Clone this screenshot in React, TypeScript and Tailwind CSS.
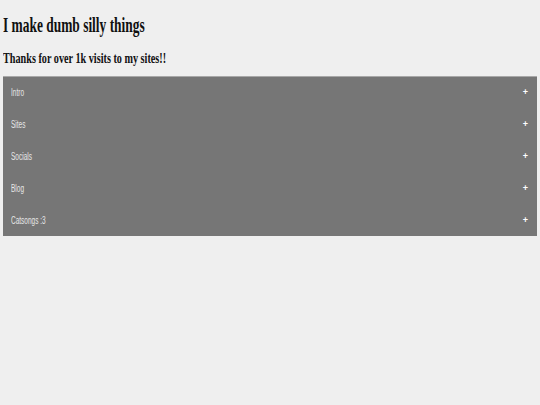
const sections = ["Intro", "Sites", "Socials", "Blog", "Catsongs :3"]

export default function App() {
  return (
    <div className="min-h-[405px] w-[540px] bg-[#efefef] px-[3px] pt-[12px]">
      {/* Heading */}
      <h1 className="h-[26px] font-['Liberation_Serif',serif] text-[22px] font-bold leading-[26px] text-[#111]">
        <span className="inline-block origin-left scale-x-[0.61] whitespace-nowrap">I make dumb silly things</span>
      </h1>
      <h2 className="mt-[11px] h-[18px] font-['Liberation_Serif',serif] text-[15px] font-bold leading-[18px] text-[#111]">
        <span className="inline-block origin-left scale-x-[0.68] whitespace-nowrap">Thanks for over 1k visits to my sites!!</span>
      </h2>

      {/* Accordion */}
      <div className="mt-[9px] bg-[#767676] shadow-[inset_0_1px_0_#a8a8a8]">
        {sections.map((name) => (
          <button
            key={name}
            className="flex h-[32px] w-full items-center justify-between px-[8px] font-['Liberation_Sans',sans-serif] text-[10px] text-[#e6e6e6]"
          >
            <span className="inline-block origin-left scale-x-[0.65] whitespace-nowrap">{name}</span>
            <span className="mr-[1px] mt-[2px] text-[9px] font-bold text-white">+</span>
          </button>
        ))}
      </div>
    </div>
  )
}
